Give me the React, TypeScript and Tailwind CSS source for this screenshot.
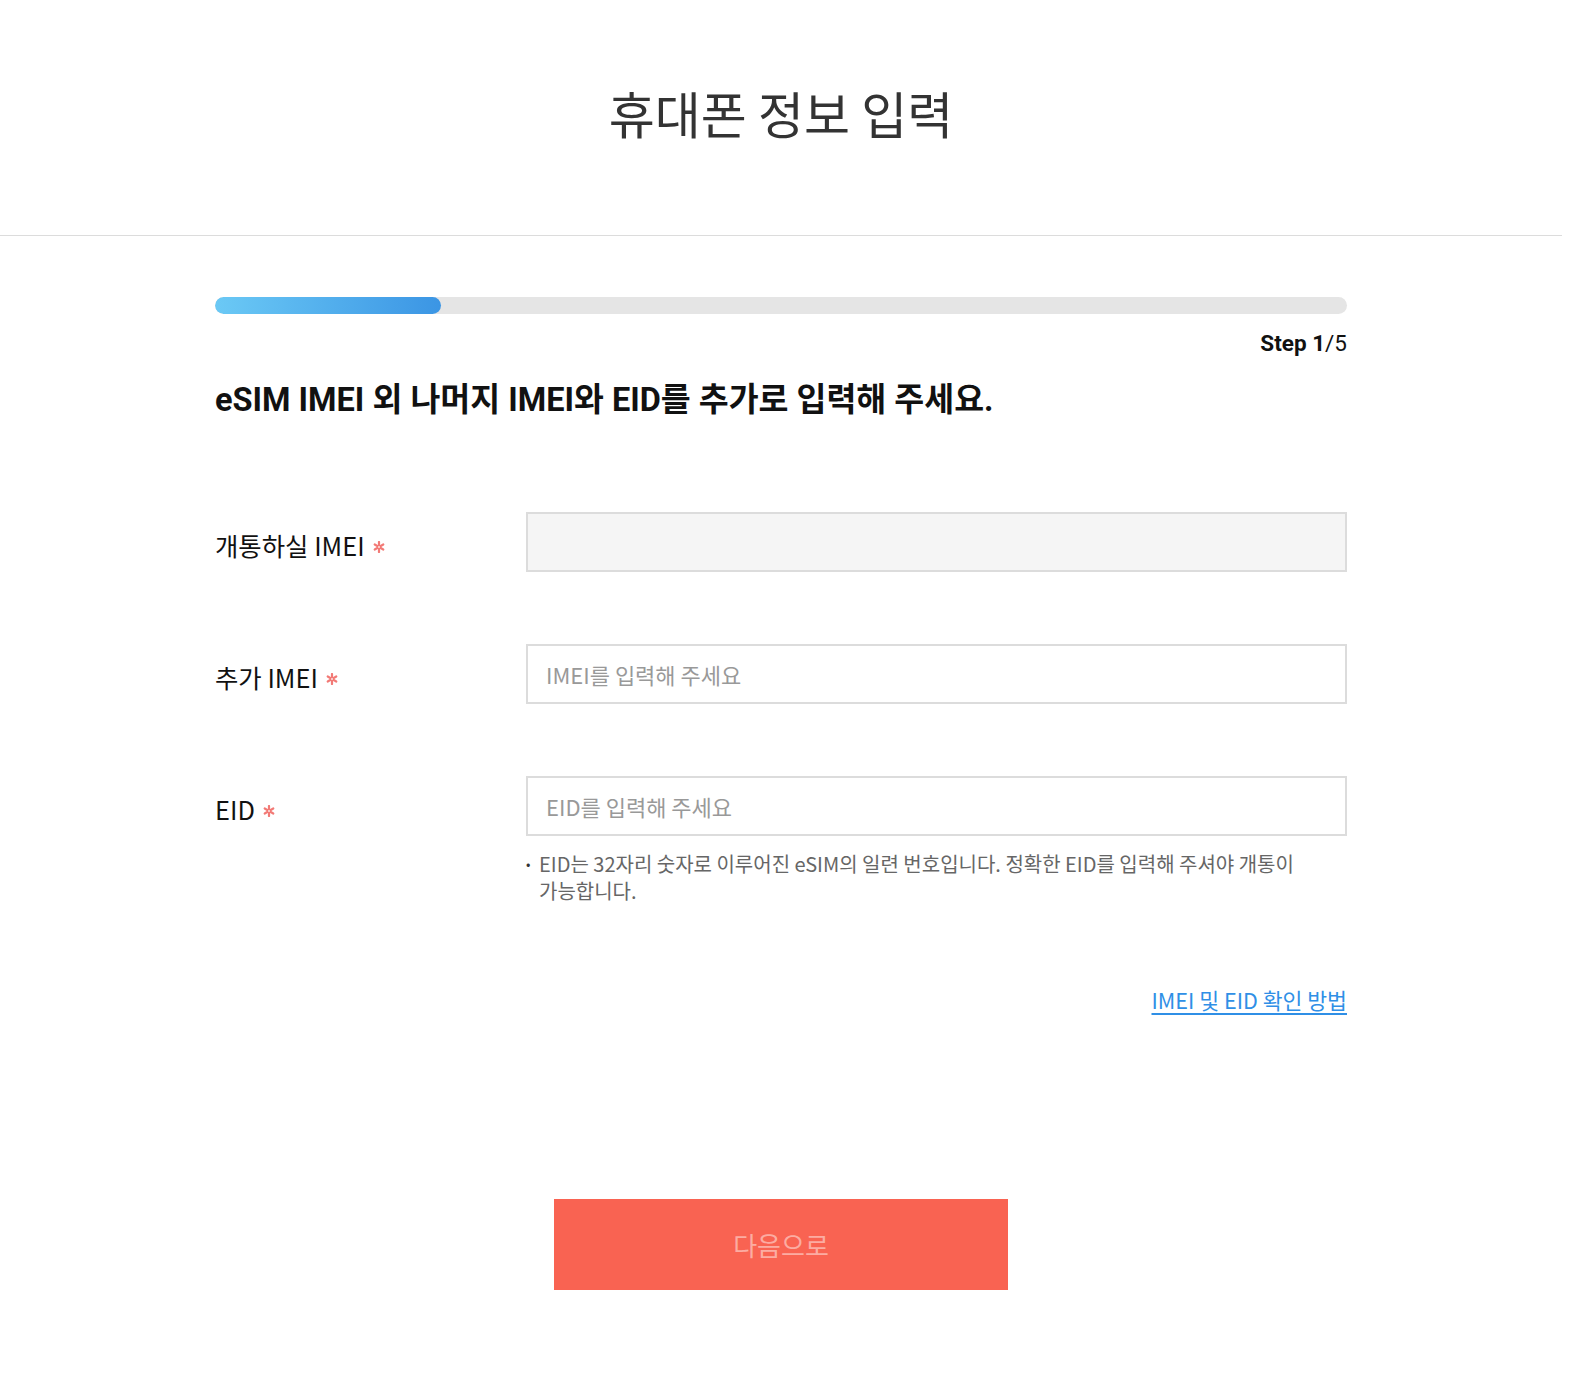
import React from "react";

const kr = "font-['Noto_Sans_CJK_KR','Noto_Sans',sans-serif]";
const rb = "font-['Roboto','Noto_Sans_CJK_KR',sans-serif]";

function Star() {
  return (
    <svg className="ml-[8px] mt-[4px] shrink-0" width="12" height="12" viewBox="0 0 12 12" aria-hidden="true">
      <g stroke="#f27a76" strokeWidth="2.2" strokeLinecap="round">
        <line x1="6" y1="1" x2="6" y2="11" />
        <line x1="1.7" y1="3.5" x2="10.3" y2="8.5" />
        <line x1="1.7" y1="8.5" x2="10.3" y2="3.5" />
      </g>
      <circle cx="6" cy="6" r="1" fill="#fde4e3" />
    </svg>
  );
}

export default function App() {
  return (
    <div className="w-[1562px] bg-white min-h-[1373px]">
      <header className="h-[236px] border-b border-[#dcdcdc] flex items-center justify-center">
        <h1 className={`text-[50px] leading-none text-[#333] font-normal ${kr} -mt-[11px]`}>휴대폰 정보 입력</h1>
      </header>

      <main className="w-[1132px] mx-auto">
        <div className="mt-[61px] h-[17px] rounded-full bg-[#e5e5e5] overflow-hidden">
          <div className="h-full w-[226px] rounded-full bg-gradient-to-r from-[#6bc9f5] to-[#3b95e4]" />
        </div>
        <div className={`mt-[16px] flex justify-end text-[22.5px] leading-[26px] text-[#111] ${rb}`}>
          <span><b className="font-bold">Step 1</b>/5</span>
        </div>
        <h2 className={`mt-[24px] text-[32.5px] leading-[40px] font-bold text-[#111] ${rb}`}>
          eSIM IMEI 외 나머지 IMEI와 EID를 추가로 입력해 주세요.
        </h2>

        <div className={`mt-[92px] flex flex-col gap-[72px] ${kr}`}>
          <div className="flex items-center">
            <div className="w-[311px] flex items-center text-[25.4px] text-[#111] pt-[6px]">
              개통하실 IMEI<Star />
            </div>
            <div className="flex-1 h-[60px] border-2 border-[#dcdcdc] bg-[#f5f5f5]" />
          </div>

          <div className="flex items-center">
            <div className="w-[311px] flex items-center text-[25.4px] text-[#111] pt-[6px]">
              추가 IMEI<Star />
            </div>
            <input
              className="flex-1 h-[60px] border-2 border-[#dcdcdc] bg-white px-[18px] text-[22px] text-[#333] placeholder:text-[#999] outline-none"
              placeholder="IMEI를 입력해 주세요"
            />
          </div>

          <div className="flex items-start">
            <div className="w-[311px] h-[60px] flex items-center text-[25.4px] text-[#111] pt-[6px]">
              EID<Star />
            </div>
            <div className="flex-1">
              <input
                className="w-full h-[60px] border-2 border-[#dcdcdc] bg-white px-[18px] text-[22px] text-[#333] placeholder:text-[#999] outline-none"
                placeholder="EID를 입력해 주세요"
              />
              <div className="mt-[14px] flex text-[20px] leading-[27px] text-[#666]">
                <span className="w-[13px] shrink-0 text-[13px] text-[#333]">•</span>
                <p className="pr-[40px]">
                  EID는 32자리 숫자로 이루어진 eSIM의 일련 번호입니다. 정확한 EID를 입력해 주셔야 개통이 가능합니다.
                </p>
              </div>
            </div>
          </div>
        </div>

        <div className={`mt-[82px] flex justify-end ${kr}`}>
          <a href="#" className="text-[21.6px] leading-[28px] text-[#2f8fe6] underline underline-offset-[4px]">
            IMEI 및 EID 확인 방법
          </a>
        </div>

        <div className="mt-[185px] pb-[84px] flex justify-center">
          <button className={`w-[454px] h-[91px] bg-[#f96352] text-[26px] text-[#fcaca2] ${kr}`}>
            다음으로
          </button>
        </div>
      </main>
    </div>
  );
}
